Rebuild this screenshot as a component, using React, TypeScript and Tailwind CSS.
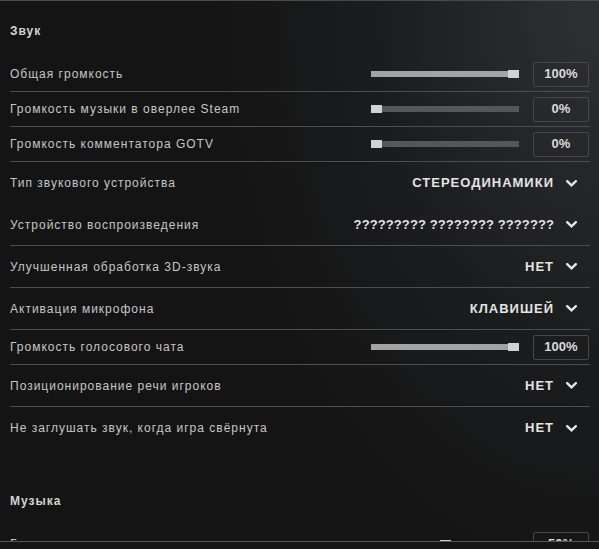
import React from "react";

const font = { fontFamily: '"Liberation Sans", Arial, sans-serif' };

function Chevron() {
  return (
    <svg width="11" height="7" viewBox="0 0 11 7" className="ml-[12px] shrink-0">
      <polyline points="1.2,1.2 5.5,5.3 9.8,1.2" fill="none" stroke="#e6e6e6" strokeWidth="2.4" strokeLinecap="square" />
    </svg>
  );
}

function SliderRow({ label, value, divider = true }: { label: string; value: number; divider?: boolean }) {
  return (
    <div className={`flex h-[35px] items-center justify-between ${divider ? "border-b border-[#4e4e4e]" : ""}`}>
      <span className="text-[12px] tracking-[1px] text-[#c6c6c6]">{label}</span>
      <div className="flex items-center">
        <div className="relative h-[6px] w-[148px] bg-[#575757]">
          <div className="absolute left-0 top-0 h-full bg-[#a3a3a3]" style={{ width: `${value}%` }} />
          <div
            className="absolute top-[-1px] h-[8px] w-[11px] bg-[#d2d2d2]"
            style={{ left: `${(value / 100) * (148 - 11)}px` }}
          />
        </div>
        <div className="ml-[14px] mr-px flex h-[25px] w-[56px] items-center justify-center rounded-[2px] border border-[#474747] text-[13px] font-bold text-[#dadada]">
          {value}%
        </div>
      </div>
    </div>
  );
}

function DropRow({
  label,
  value,
  divider = true,
  tight = false,
}: {
  label: string;
  value: string;
  divider?: boolean;
  tight?: boolean;
}) {
  return (
    <div className={`flex h-[42px] items-center justify-between ${divider ? "border-b border-[#4e4e4e]" : ""}`}>
      <span className="text-[12px] tracking-[1px] text-[#c6c6c6]">{label}</span>
      <div className="mr-[13px] flex items-center">
        <span
          className={`text-[13px] font-bold text-[#e4e4e4] ${tight ? "tracking-[0.1px]" : "tracking-[1px]"}`}
        >
          {value}
        </span>
        <Chevron />
      </div>
    </div>
  );
}

export default function App() {
  return (
    <div
      style={font}
      className="relative h-[549px] w-[599px] overflow-hidden border-t border-[#4a4a4a] bg-[radial-gradient(ellipse_65%_110%_at_100%_0%,#2e3134_0%,#1c1d1f_55%,#141414_100%)]"
    >
      <div className="pl-[10px] pr-[9px]">
        <div className="pt-[22px] text-[12px] font-bold leading-[16px] tracking-[1px] text-[#d2d2d2]">Звук</div>
        <div className="mt-[18px]">
          <SliderRow label="Общая громкость" value={100} />
          <SliderRow label="Громкость музыки в оверлее Steam" value={0} />
          <SliderRow label="Громкость комментатора GOTV" value={0} />
          <DropRow label="Тип звукового устройства" value="СТЕРЕОДИНАМИКИ" divider={false} />
          <DropRow label="Устройство воспроизведения" value="????????? ???????? ???????" tight />
          <DropRow label="Улучшенная обработка 3D-звука" value="НЕТ" />
          <DropRow label="Активация микрофона" value="КЛАВИШЕЙ" />
          <SliderRow label="Громкость голосового чата" value={100} />
          <DropRow label="Позиционирование речи игроков" value="НЕТ" />
          <DropRow label="Не заглушать звук, когда игра свёрнута" value="НЕТ" divider={false} />
        </div>
        <div className="mt-[44px] text-[12px] font-bold leading-[16px] tracking-[1px] text-[#d2d2d2]">Музыка</div>
        <div className="mt-[18px]">
          <SliderRow label="Громкость главного меню" value={50} />
        </div>
      </div>
      <div className="absolute bottom-0 left-0 right-0 h-[8px] border-t border-[#555] bg-[#151515]" />
    </div>
  );
}
